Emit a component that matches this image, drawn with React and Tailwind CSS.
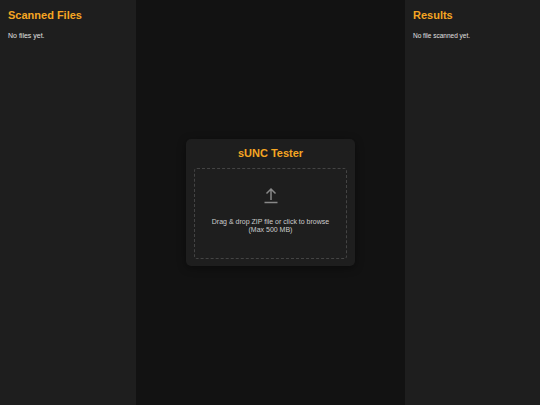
import { useState } from 'react'

const Sidebar = ({ title, empty, width, textSize }) => (
  <aside className={`${width} shrink-0 bg-[#1e1e1e] p-[8px]`}>
    <h2 className="text-[11px] leading-[13px] mt-[1px] font-bold text-[#f5a623]">{title}</h2>
    <p className={`${textSize} leading-[8px] mt-[10px] text-[#e0e0e0]`}>{empty}</p>
  </aside>
)

const App = () => {
  const [file] = useState(null)

  return (
    <div className="flex h-[405px] w-[540px] overflow-hidden bg-[#121212] font-['Liberation_Sans',Arial,sans-serif]">
      <Sidebar title="Scanned Files" empty="No files yet." width="w-[136px]" textSize="text-[7px]" />

      <main className="flex flex-1 items-center justify-center">
        <div className="w-[169px] h-[127px] rounded-[5px] bg-[#1e1e1e] p-[8px] shadow-[0_2px_8px_rgba(0,0,0,0.4)]">
          <h1 className="text-center text-[11px] leading-[13px] font-bold text-[#f5a623]">sUNC Tester</h1>
          <div className="mt-[8px] flex h-[91px] flex-col items-center rounded-[3px] border border-dashed border-[#444] pt-[18px] text-center">
            <svg width="16" height="17" viewBox="0 0 16 17" fill="none" stroke="#888" strokeWidth="1.5">
              <path d="M8 13V2M3.5 6.5 8 2l4.500 4.500" />
              <path d="M1.500 15.500h13" />
            </svg>
            <p className="mt-[14px] text-[7px] leading-[8px] text-[#cccccc]">
              {file ? file.name : 'Drag & drop ZIP file or click to browse'}
              <br />
              (Max 500 MB)
            </p>
          </div>
        </div>
      </main>

      <Sidebar title="Results" empty="No file scanned yet." width="w-[135px]" textSize="text-[6.5px]" />
    </div>
  )
}

export default App
